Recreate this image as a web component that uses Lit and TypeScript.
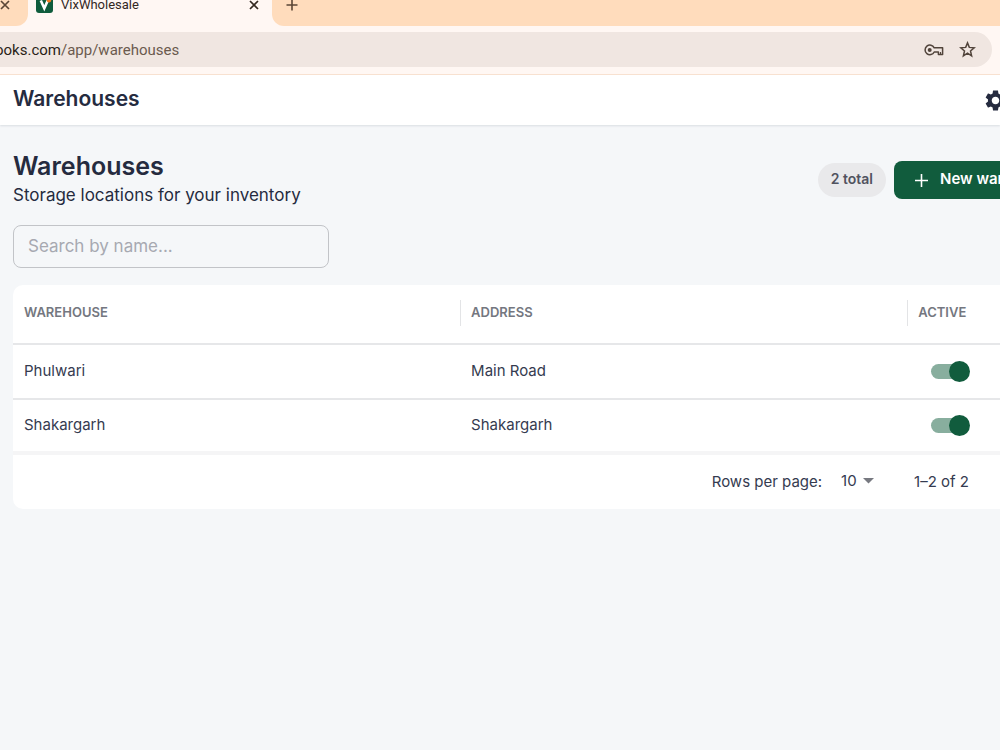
import { LitElement, html, css } from "lit";
import { customElement, state } from "lit/decorators.js";

interface Warehouse {
  name: string;
  address: string;
  active: boolean;
}

const closeIcon = html`<svg width="10" height="10" viewBox="0 0 10 10" fill="none" stroke="currentColor" stroke-width="1.7">
  <path d="M1 1l8 8M9 1L1 9" />
</svg>`;

@customElement("browser-bar")
export class BrowserBar extends LitElement {
  static styles = css`
    :host {
      display: block;
      font-family: Roboto, sans-serif;
      background: #fff7f3;
      border-bottom: 1px solid #fae1cf;
    }
    * {
      box-sizing: border-box;
    }
    button {
      border: 0;
      padding: 0;
      background: none;
      color: inherit;
      display: flex;
      flex: none;
    }
    .strip {
      display: flex;
      height: 26px;
      overflow: hidden;
    }
    .prev,
    .tab,
    .rest {
      display: flex;
      align-items: center;
      padding-bottom: 17px;
    }
    .prev {
      width: 28px;
      background: #ffdcbc;
      border-bottom-right-radius: 12px;
      color: #5b4636;
      flex: none;
    }
    .tab {
      width: 244px;
      flex: none;
      padding-left: 8px;
      padding-right: 13px;
      gap: 8px;
      color: #33281f;
    }
    .name {
      flex: 1;
      font-size: 13px;
      line-height: 16px;
    }
    .rest {
      flex: 1;
      background: #ffdcbc;
      border-bottom-left-radius: 12px;
      padding-left: 14px;
      color: #5b4636;
    }
    .toolbar {
      padding: 6px 8px 7px 0;
    }
    .address {
      height: 35px;
      background: #f0e6e1;
      border-radius: 0 18px 18px 0;
      display: flex;
      align-items: center;
      padding-right: 16px;
      gap: 15px;
      color: #51443b;
    }
    .url {
      flex: 1;
      font-size: 15px;
      line-height: 20px;
      color: #6b5a4e;
    }
    .host {
      color: #2a1f18;
      margin-left: -5px;
    }
    svg {
      flex: none;
      display: block;
    }
  `;

  render() {
    return html`
      <div class="strip">
        <div class="prev"><button aria-label="Close tab">${closeIcon}</button></div>
        <div class="tab">
          <svg width="17" height="17" viewBox="0 0 17 17">
            <rect width="17" height="17" rx="3" fill="#0f5c3c" />
            <path d="M4.8 4.5L8.3 12.4L11.8 4.5" fill="none" stroke="#fff" stroke-width="2.6" />
            <circle cx="13" cy="4.2" r="2.2" fill="#f47b20" />
          </svg>
          <span class="name">VixWholesale</span>
          <button aria-label="Close tab">${closeIcon}</button>
        </div>
        <div class="rest">
          <button aria-label="New tab">
            <svg width="12" height="12" viewBox="0 0 12 12" fill="none" stroke="currentColor" stroke-width="1.6">
              <path d="M6 0.5v11M0.5 6h11" />
            </svg>
          </button>
        </div>
      </div>
      <div class="toolbar">
        <div class="address">
          <span class="url"><span class="host">ooks.com</span>/app/warehouses</span>
          <button aria-label="Passwords">
            <svg width="20" height="12" viewBox="0 0 20 12" fill="none" stroke="currentColor" stroke-width="1.5">
              <path d="M10.2 3.8H18.6V10.4H14.4V8H10.2A4.8 4.8 0 1 1 10.2 3.8Z" stroke-linejoin="round" />
              <path d="M16.5 10.4V8" stroke-width="1.2" />
              <circle cx="5.7" cy="6" r="2" fill="currentColor" stroke="none" />
            </svg>
          </button>
          <button aria-label="Bookmark">
            <svg width="17" height="17" viewBox="0 0 17 17" fill="none" stroke="currentColor" stroke-width="1.5">
              <path d="M8.5 1.9L10.3 6.4L15.2 6.8L11.5 10L12.6 14.8L8.5 12.2L4.4 14.8L5.5 10L1.8 6.8L6.7 6.4Z" />
            </svg>
          </button>
        </div>
      </div>
    `;
  }
}

@customElement("app-root")
export class AppRoot extends LitElement {
  @state() private query = "";
  @state() private rows: Warehouse[] = [
    { name: "Phulwari", address: "Main Road", active: true },
    { name: "Shakargarh", address: "Shakargarh", active: true },
  ];

  static styles = css`
    :host {
      display: block;
      min-height: 100vh;
      overflow: hidden;
      background: #f5f7f9;
      color: #252b3f;
      font-family: Inter, sans-serif;
    }
    * {
      box-sizing: border-box;
    }
    h1,
    h2,
    p {
      margin: 0;
    }
    button,
    input,
    select {
      font: inherit;
    }
    .appbar {
      display: flex;
      align-items: center;
      justify-content: space-between;
      height: 50px;
      padding-left: 13px;
      background: #fff;
      box-shadow: 0 1px 2px #d9dde2;
    }
    .bartitle {
      font-size: 21px;
      line-height: 24px;
      font-weight: 600;
      padding-bottom: 3px;
    }
    .gear {
      border: 0;
      padding: 0;
      background: none;
      color: #252b3f;
      width: 15px;
      overflow: hidden;
    }
    .gear svg,
    .new svg {
      display: block;
      flex: none;
    }
    main {
      padding: 26px 0 0 13px;
    }
    .head {
      display: flex;
      justify-content: space-between;
      align-items: center;
    }
    h1 {
      font-size: 25px;
      line-height: 30px;
      font-weight: 600;
    }
    .sub {
      font-size: 17px;
      line-height: 28px;
    }
    .actions {
      display: flex;
      align-items: center;
      gap: 8px;
    }
    .chip {
      height: 34px;
      padding: 0 13px;
      border-radius: 17px;
      background: #e9e9eb;
      color: #51535f;
      font-size: 14px;
      line-height: 32px;
      font-weight: 600;
    }
    .new {
      display: flex;
      align-items: center;
      gap: 12px;
      width: 106px;
      height: 38px;
      padding: 0 0 0 21px;
      border: 0;
      border-radius: 8px 0 0 8px;
      background: #115c3d;
      color: #fff;
      font-size: 15px;
      line-height: 36px;
      font-weight: 600;
      white-space: nowrap;
      overflow: hidden;
    }
    .new span {
      padding-bottom: 2px;
    }
    .search {
      display: block;
      width: 316px;
      height: 43px;
      margin: 16px 0 17px;
      padding: 0 14px 2px;
      border: 1px solid #c2c4c8;
      border-radius: 8px;
      background: transparent;
      color: inherit;
      font-size: 17px;
    }
    .search::placeholder {
      color: #a7a9b1;
      opacity: 1;
    }
    .panel {
      background: #fff;
      border-radius: 10px 0 0 10px;
    }
    table {
      width: 100%;
      table-layout: fixed;
      border-collapse: separate;
      border-spacing: 0;
    }
    .wide {
      width: 45.3%;
    }
    th,
    td {
      padding: 0 0 0 11px;
      text-align: left;
      border-bottom: 2px solid #e6e7e9;
    }
    th {
      height: 60px;
      padding: 0 0 2px;
      font-size: 13px;
      line-height: 24px;
      font-weight: 600;
      color: #747780;
    }
    th span {
      display: block;
      padding: 0 0 2px 11px;
    }
    th + th span {
      padding-left: 10px;
      border-left: 1px solid #e3e4e6;
    }
    td {
      height: 55px;
      padding-bottom: 2px;
      font-size: 15px;
      color: #353b50;
    }
    tr:last-child td {
      height: 55px;
      border-bottom: 4px solid #f5f5f6;
    }
    .toggle {
      appearance: none;
      display: grid;
      align-items: center;
      width: 39px;
      height: 21px;
      margin: 2px 0 0 13px;
    }
    .toggle::before,
    .toggle::after {
      content: "";
      grid-area: 1 / 1;
    }
    .toggle::before {
      width: 36px;
      height: 15px;
      border-radius: 8px;
      background: #a9abb0;
    }
    .toggle::after {
      width: 21px;
      height: 21px;
      border-radius: 50%;
      background: #f5f6f8;
    }
    .toggle:checked::before {
      background: #88ae9e;
    }
    .toggle:checked::after {
      justify-self: end;
      background: #115c3d;
    }
    .pager {
      display: flex;
      align-items: center;
      justify-content: flex-end;
      height: 54px;
      padding-right: 31px;
      padding-bottom: 2px;
      font-size: 15px;
      color: #353b50;
    }
    .size {
      appearance: none;
      width: 22px;
      margin-left: 19px;
      padding: 0 0 2px;
      border: 0;
      background: none;
      color: inherit;
    }
    .range {
      margin-left: 40px;
    }
  `;

  private toggle(row: Warehouse) {
    this.rows = this.rows.map((r) => (r === row ? { ...r, active: !r.active } : r));
  }

  render() {
    const shown = this.rows.filter((r) => r.name.toLowerCase().includes(this.query.toLowerCase()));
    return html`
      <browser-bar></browser-bar>
      <header class="appbar">
        <h2 class="bartitle">Warehouses</h2>
        <button class="gear" aria-label="Settings">
          <svg width="21" height="21" viewBox="2 2 20 20" fill="currentColor">
            <path
              d="M19.14 12.94c.04-.3.06-.61.06-.94 0-.32-.02-.64-.07-.94l2.03-1.58c.18-.14.23-.41.12-.61l-1.92-3.32c-.12-.22-.37-.29-.59-.22l-2.39.96c-.5-.38-1.03-.7-1.62-.94l-.36-2.54c-.04-.24-.24-.41-.48-.41h-3.84c-.24 0-.43.17-.47.41l-.36 2.54c-.59.24-1.13.57-1.62.94l-2.39-.96c-.22-.08-.47 0-.59.22L2.74 8.87c-.12.21-.08.47.12.61l2.03 1.58c-.05.3-.09.63-.09.94s.02.64.07.94l-2.03 1.58c-.18.14-.23.41-.12.61l1.92 3.32c.12.22.37.29.59.22l2.39-.96c.5.38 1.03.7 1.62.94l.36 2.54c.05.24.24.41.48.41h3.84c.24 0 .44-.17.47-.41l.36-2.54c.59-.24 1.13-.56 1.62-.94l2.39.96c.22.08.47 0 .59-.22l1.92-3.32c.12-.22.07-.47-.12-.61l-2.01-1.58zM12 15.6c-1.98 0-3.6-1.62-3.6-3.6s1.62-3.6 3.6-3.6 3.6 1.62 3.6 3.6-1.62 3.6-3.6 3.6z"
            />
          </svg>
        </button>
      </header>
      <main>
        <div class="head">
          <div>
            <h1>Warehouses</h1>
            <p class="sub">Storage locations for your inventory</p>
          </div>
          <div class="actions">
            <span class="chip">${this.rows.length} total</span>
            <button class="new">
              <svg width="13" height="13" viewBox="0 0 13 13" fill="none" stroke="#fff" stroke-width="1.6">
                <path d="M6.5 0v13M0 6.5h13" />
              </svg>
              <span>New warehouse</span>
            </button>
          </div>
        </div>
        <input
          class="search"
          type="text"
          aria-label="Search by name"
          placeholder="Search by name..."
          .value=${this.query}
          @input=${(e: Event) => (this.query = (e.target as HTMLInputElement).value)}
        />
        <section class="panel">
          <table>
            <thead>
              <tr>
                <th class="wide"><span>WAREHOUSE</span></th>
                <th class="wide"><span>ADDRESS</span></th>
                <th><span>ACTIVE</span></th>
              </tr>
            </thead>
            <tbody>
              ${shown.map(
                (r) => html`<tr>
                  <td>${r.name}</td>
                  <td>${r.address}</td>
                  <td>
                    <input
                      class="toggle"
                      type="checkbox"
                      role="switch"
                      aria-label="${r.name} active"
                      .checked=${r.active}
                      @change=${() => this.toggle(r)}
                    />
                  </td>
                </tr>`
              )}
            </tbody>
          </table>
          <div class="pager">
            <label for="size">Rows per page:</label>
            <select id="size" class="size">
              <option>10</option>
              <option>25</option>
              <option>50</option>
            </select>
            <svg width="11" height="6" viewBox="0 0 11 6" fill="#777980"><path d="M0 0h11L5.5 5.5z" /></svg>
            <span class="range">1–${shown.length} of ${shown.length}</span>
          </div>
        </section>
      </main>
    `;
  }
}
